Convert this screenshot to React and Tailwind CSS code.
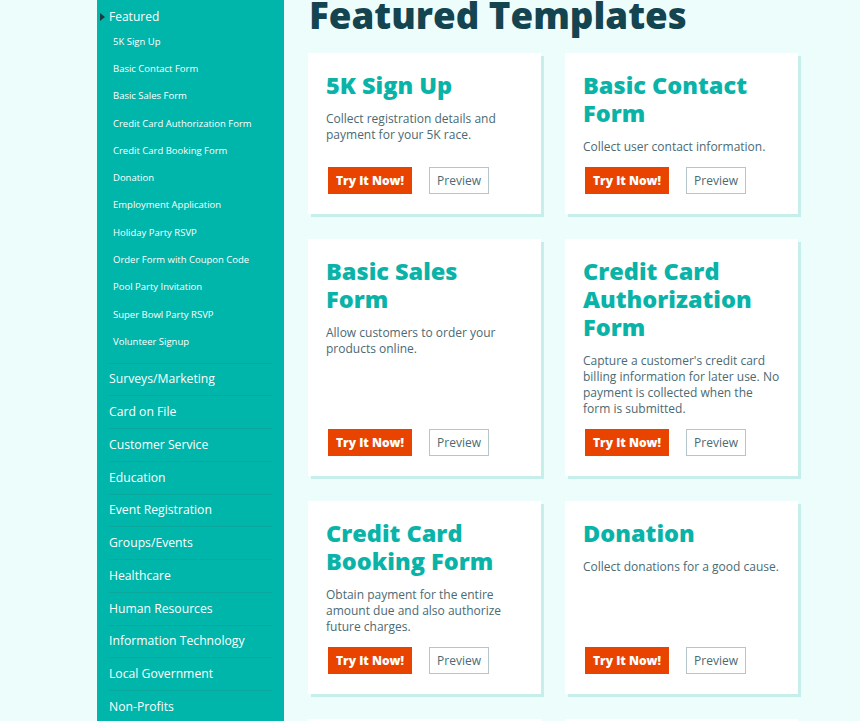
import React from "react";

const featured = [
  "5K Sign Up",
  "Basic Contact Form",
  "Basic Sales Form",
  "Credit Card Authorization Form",
  "Credit Card Booking Form",
  "Donation",
  "Employment Application",
  "Holiday Party RSVP",
  "Order Form with Coupon Code",
  "Pool Party Invitation",
  "Super Bowl Party RSVP",
  "Volunteer Signup",
];

const categories = [
  "Surveys/Marketing",
  "Card on File",
  "Customer Service",
  "Education",
  "Event Registration",
  "Groups/Events",
  "Healthcare",
  "Human Resources",
  "Information Technology",
  "Local Government",
  "Non-Profits",
  "Real Estate",
  "Sports",
];

const templates = [
  {
    title: "5K Sign Up",
    text: "Collect registration details and payment for your 5K race.",
  },
  {
    title: "Basic Contact Form",
    text: "Collect user contact information.",
  },
  {
    title: "Basic Sales Form",
    text: "Allow customers to order your products online.",
  },
  {
    title: "Credit Card Authorization Form",
    text: "Capture a customer's credit card billing information for later use. No payment is collected when the form is submitted.",
  },
  {
    title: "Credit Card Booking Form",
    text: "Obtain payment for the entire amount due and also authorize future charges.",
  },
  {
    title: "Donation",
    text: "Collect donations for a good cause.",
  },
  {
    title: "Employment Application",
    text: "Accept job applications from candidates online.",
  },
  {
    title: "Holiday Party RSVP",
    text: "Let guests respond to your holiday party invitation.",
  },
];

// --- Sidebar ---
const Sidebar = () => (
  <aside className="w-[187px] shrink-0 bg-[#00b5aa] pt-[9px] pb-6">
    <div className="relative pl-3">
      <span className="absolute left-[3px] top-[4px] w-0 h-0 border-y-[4px] border-y-transparent border-l-[5px] border-l-[#1b3b45]" />
      <div className="text-[12px] leading-4 text-white">Featured</div>
    </div>
    <ul className="mt-[3.4px] pl-4">
      {featured.map((f) => (
        <li
          key={f}
          className="h-[27.27px] flex items-center text-[9.5px] font-medium text-white"
        >
          {f}
        </li>
      ))}
    </ul>
    <ul className="mt-[7px] ml-3 mr-3">
      {categories.map((c) => (
        <li
          key={c}
          className="h-[32.77px] flex items-center border-t border-[#0aa89d] text-[12.2px] text-white"
        >
          {c}
        </li>
      ))}
    </ul>
  </aside>
);

// --- Template Card ---
const TemplateCard = ({ title, text }) => (
  <div className="bg-white shadow-[3px_3px_0_#c6efeb] pt-[18px] pl-[18px] pr-[17px] pb-[20px] flex flex-col">
    <h3 className="pr-3 text-[23.5px] leading-[28px] font-extrabold text-[#09b3a7] mb-[12px]">
      {title}
    </h3>
    <p className="text-[12px] leading-4 text-[#4b6a72]">{text}</p>
    <div className="mt-auto pt-[12px] flex items-center gap-[17px] pl-[2px]">
      <button className="w-[84px] h-[27px] bg-[#e94300] text-white text-[12px] font-extrabold">
        Try It Now!
      </button>
      <button className="w-[60px] h-[27px] border border-[#b3c7cb] text-[12px] text-[#4b6a72]">
        Preview
      </button>
    </div>
  </div>
);

export default function App() {
  return (
    <div className="min-h-screen bg-[#edfdfc] font-['Open_Sans',sans-serif] overflow-hidden">
      <div className="flex ml-[97px]">
        <Sidebar />
        <main className="pl-6 w-[514px]">
          <h1 className="-mt-[4px] mb-[19px] text-[36.7px] leading-[38px] font-extrabold text-[#13444f] pl-px">
            Featured Templates
          </h1>
          <section className="grid grid-cols-2 gap-x-6 gap-y-[25px]">
            {templates.map((t) => (
              <TemplateCard key={t.title} {...t} />
            ))}
          </section>
        </main>
      </div>
    </div>
  );
}
